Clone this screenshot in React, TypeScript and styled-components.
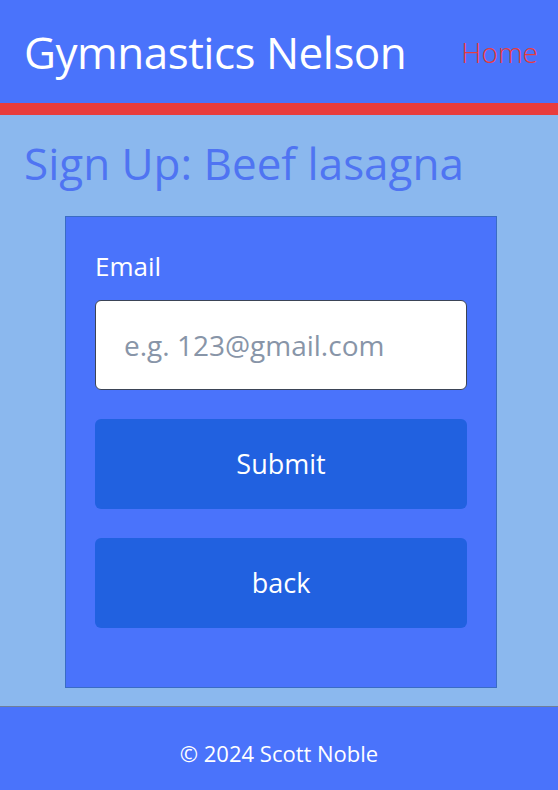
import React from 'react';
import styled, { createGlobalStyle } from 'styled-components';

const GlobalStyle = createGlobalStyle`
  html, body {
    margin: 0;
    padding: 0;
  }
  body {
    font-family: 'Open Sans', 'Noto Sans', sans-serif;
    background-color: #8bb8ee;
    color: #ffffff;
  }
  * {
    box-sizing: border-box;
  }
`;

const Page = styled.div`
  display: flex;
  flex-direction: column;
  min-height: 790px;
`;

const Header = styled.header`
  height: 115px;
  display: flex;
  align-items: center;
  justify-content: space-between;
  padding: 0 20px 0 24px;
  background-color: #4a73fb;
  border-bottom: 12px solid #e83c3c;
`;

const Brand = styled.h1`
  margin: 0;
  font-size: 44px;
  font-weight: 400;
  color: #ffffff;
  letter-spacing: -0.5px;
`;

const NavLink = styled.a`
  font-size: 28px;
  font-weight: 300;
  color: #e83c3c;
  text-decoration: none;
  cursor: pointer;
`;

const Main = styled.main`
  flex: 1;
  display: flex;
  flex-direction: column;
  padding: 0 24px 18px;
`;

const PageTitle = styled.h2`
  margin: 22px 0 26px;
  font-size: 44px;
  font-weight: 400;
  color: #4f74f2;
  line-height: 1.2;
`;

const Card = styled.form`
  width: 432px;
  margin-left: 41px;
  display: flex;
  flex-direction: column;
  padding: 31px 29px 59px;
  background-color: #4a73fb;
  border: 1px solid #3a6cc4;
`;

const Label = styled.label`
  font-size: 26px;
  line-height: 36px;
  margin-bottom: 16px;
`;

const Input = styled.input`
  height: 90px;
  width: 100%;
  padding: 0 28px;
  font-family: inherit;
  font-size: 28px;
  color: #222;
  background: #ffffff;
  border: 1px solid #3b4456;
  border-radius: 6px;
  outline: none;

  &::placeholder {
    color: #8895a8;
  }
`;

const Button = styled.button`
  height: 90px;
  width: 100%;
  margin-top: 29px;
  font-family: inherit;
  font-size: 27px;
  color: #ffffff;
  background-color: #2161e0;
  border: none;
  border-radius: 6px;
  cursor: pointer;
`;

const Footer = styled.footer`
  height: 84px;
  display: flex;
  align-items: center;
  justify-content: center;
  padding-top: 8px;
  background-color: #4a73fb;
  border-top: 1px solid #6f7f9a;
  font-size: 22px;
`;

export default function App() {
  return (
    <Page>
      <GlobalStyle />
      <Header>
        <Brand>Gymnastics Nelson</Brand>
        <NavLink>Home</NavLink>
      </Header>
      <Main>
        <PageTitle>Sign Up: Beef lasagna</PageTitle>
        <Card onSubmit={(e) => e.preventDefault()}>
          <Label htmlFor="email">Email</Label>
          <Input id="email" type="email" placeholder="e.g. 123@gmail.com" />
          <Button type="submit">Submit</Button>
          <Button type="button">back</Button>
        </Card>
      </Main>
      <Footer>© 2024 Scott Noble</Footer>
    </Page>
  );
}
